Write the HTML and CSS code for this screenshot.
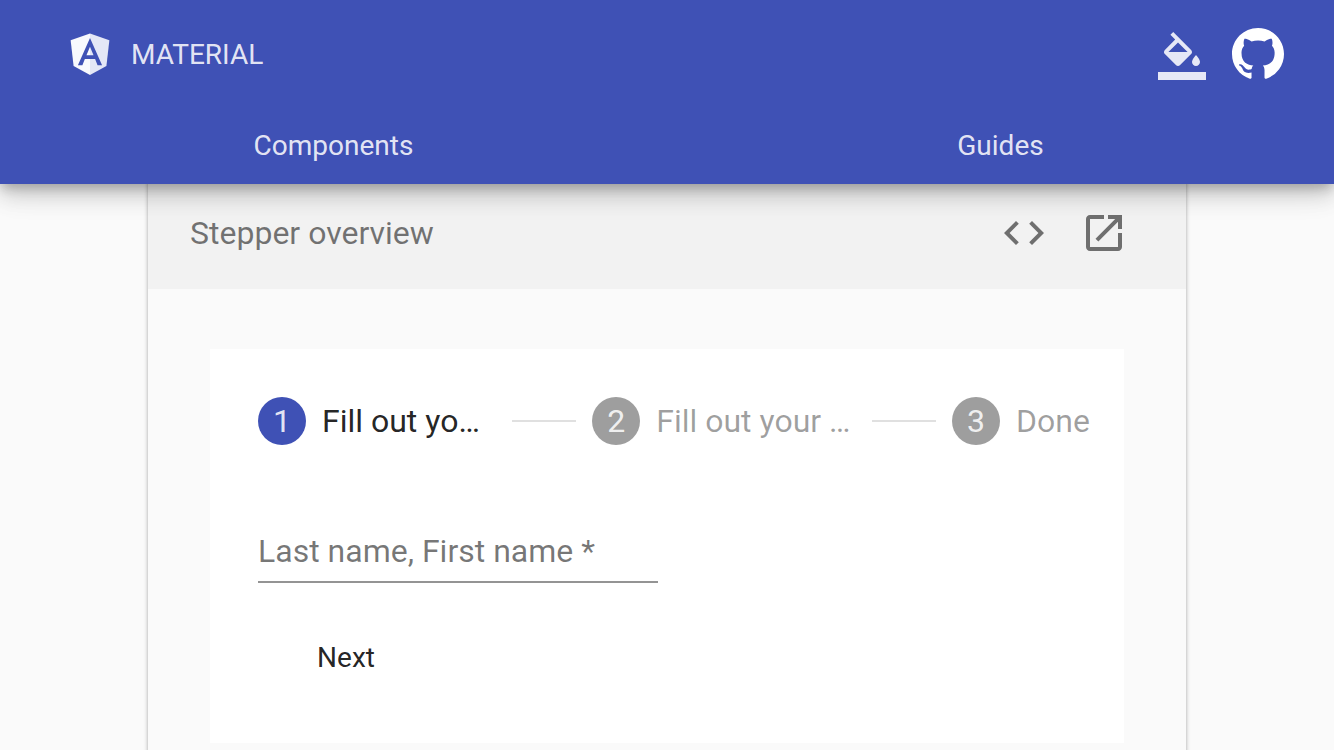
FILE: index.html
```html
<!DOCTYPE html>
<html lang="en">
<head>
  <meta charset="UTF-8">
  <meta name="viewport" content="width=device-width, initial-scale=1.0">
  <title>Angular Material</title>
  <link rel="stylesheet" href="styles.css">
</head>
<body>
  <header class="navbar">
    <div class="navbar-top">
      <a class="brand" href="#">
        <svg class="brand-logo" viewBox="0 0 250 250" aria-hidden="true">
          <path fill="#f8f9fd" d="M125 26L31.9 59.2l14.2 123.1L125 226z"/>
          <path fill="#e4e7f6" d="M125 26l93.1 33.2-14.2 123.1L125 226z"/>
          <path fill="#3f51b5" fill-rule="evenodd" d="M125 48L66.8 178.6h21.7l11.7-29.2h49.4l11.7 29.2H183L125 48zm17 83.4h-34l17-40.9 17 40.9z"/>
        </svg>
        <span>MATERIAL</span>
      </a>
      <div class="navbar-actions">
        <button type="button" class="icon-button" aria-label="Select a theme">
          <svg class="icon" viewBox="0 0 24 24" aria-hidden="true">
            <path d="M16.56 8.94L7.62 0 6.21 1.41l2.38 2.38-5.15 5.15c-.59.59-.59 1.54 0 2.12l5.5 5.5c.29.29.68.44 1.06.44s.77-.15 1.06-.44l5.5-5.5c.59-.58.59-1.53 0-2.12zM5.21 10L10 5.21 14.79 10H5.21zM19 11.5s-2 2.17-2 3.5c0 1.1.9 2 2 2s2-.9 2-2c0-1.33-2-3.5-2-3.5zM0 20h24v4H0z"/>
          </svg>
        </button>
        <a class="github-link" href="#" aria-label="GitHub">
          <svg class="github-logo" viewBox="0 0 16 16" aria-hidden="true">
            <path d="M8 0C3.58 0 0 3.58 0 8c0 3.54 2.29 6.53 5.47 7.59.4.07.55-.17.55-.38 0-.19-.01-.82-.01-1.49-2.01.37-2.53-.49-2.69-.94-.09-.23-.48-.94-.82-1.13-.28-.15-.68-.52-.01-.53.63-.01 1.08.58 1.23.82.72 1.21 1.87.87 2.33.66.07-.52.28-.87.51-1.07-1.78-.2-3.64-.89-3.64-3.95 0-.87.31-1.59.82-2.15-.08-.2-.36-1.02.08-2.12 0 0 .67-.21 2.2.82.64-.18 1.32-.27 2-.27.68 0 1.36.09 2 .27 1.53-1.04 2.2-.82 2.2-.82.44 1.1.16 1.92.08 2.12.51.56.82 1.27.82 2.15 0 3.07-1.87 3.75-3.65 3.95.29.25.54.73.54 1.48 0 1.07-.01 1.93-.01 2.2 0 .21.15.46.55.38A8.01 8.01 0 0 0 16 8c0-4.42-3.58-8-8-8z"/>
          </svg>
        </a>
      </div>
    </div>
    <nav class="navbar-links">
      <a href="#">Components</a>
      <a href="#">Guides</a>
    </nav>
  </header>

  <main class="page">
    <section class="example">
      <div class="example-header">
        <h3>Stepper overview</h3>
        <div class="example-actions">
          <button type="button" class="icon-button" aria-label="View source">
            <svg class="icon" viewBox="0 0 24 24" aria-hidden="true">
              <path d="M9.4 16.6L4.8 12l4.6-4.6L8 6l-6 6 6 6 1.4-1.4zm5.2 0l4.6-4.6-4.6-4.6L16 6l6 6-6 6-1.4-1.4z"/>
            </svg>
          </button>
          <button type="button" class="icon-button" aria-label="Open in new window">
            <svg class="icon" viewBox="0 0 24 24" aria-hidden="true">
              <path d="M19 19H5V5h7V3H5c-1.11 0-2 .9-2 2v14c0 1.1.89 2 2 2h14c1.1 0 2-.9 2-2v-7h-2v7zM14 3v2h3.59l-9.83 9.83 1.41 1.41L19 6.41V10h2V3h-7z"/>
            </svg>
          </button>
        </div>
      </div>

      <div class="example-body">
        <div class="stepper">
          <div class="stepper-header">
            <div class="step active">
              <span class="step-number">1</span>
              <span class="step-label">Fill out your name</span>
            </div>
            <div class="step-line"></div>
            <div class="step">
              <span class="step-number">2</span>
              <span class="step-label">Fill out your address</span>
            </div>
            <div class="step-line"></div>
            <div class="step last">
              <span class="step-number">3</span>
              <span class="step-label">Done</span>
            </div>
          </div>
          <form class="stepper-content">
            <input type="text" class="name-input" placeholder="Last name, First name *" aria-label="Last name, First name" required>
            <button type="submit" class="next-button">Next</button>
          </form>
        </div>
      </div>
    </section>
  </main>
</body>
</html>
```
FILE: styles.css
```css
* {
  box-sizing: border-box;
}

body {
  display: flex;
  flex-direction: column;
  height: 100vh;
  margin: 0;
  font-family: Roboto, "Liberation Sans", sans-serif;
  font-size: 32px;
  background-color: #fafafa;
  color: rgba(0, 0, 0, .87);
}

a {
  color: inherit;
  text-decoration: none;
}

button {
  padding: 0;
  border: none;
  background: none;
  color: inherit;
  font-family: inherit;
  cursor: pointer;
}

.icon-button {
  display: flex;
}

.icon {
  width: 48px;
  height: 48px;
  fill: currentColor;
}

/* Top bar */
.navbar {
  position: relative;
  z-index: 1;
  flex: none;
  background-color: #3f51b5;
  color: rgba(255, 255, 255, .87);
  font-size: 28px;
  box-shadow: 0 6px 10px -2px rgba(0, 0, 0, .2),
              0 12px 20px 0 rgba(0, 0, 0, .14),
              0 2px 36px 0 rgba(0, 0, 0, .12);
}

.navbar-top {
  display: flex;
  align-items: center;
  justify-content: space-between;
  height: 108px;
  padding: 0 50px 0 64px;
}

.brand {
  display: flex;
  align-items: center;
  gap: 15px;
}

.brand-logo {
  width: 52px;
  height: 52px;
}

.navbar-actions {
  display: flex;
  align-items: flex-end;
  gap: 26px;
}

.github-link {
  display: flex;
}

.github-logo {
  width: 52px;
  height: 52px;
  fill: #fff;
}

.navbar-links {
  display: flex;
}

.navbar-links a {
  flex: 1;
  line-height: 76px;
  text-align: center;
}

/* Example card */
.page {
  flex: 1;
  min-height: 0;
  padding: 0 148px;
  overflow: hidden;
}

.example {
  margin-top: -7px;
  padding-bottom: 60px;
  box-shadow: 0 0 4px rgba(0, 0, 0, .35);
}

.example-header {
  display: flex;
  align-items: center;
  justify-content: space-between;
  padding: 32px 58px 32px 42px;
  background-color: #f2f2f2;
  color: rgba(0, 0, 0, .54);
}

.example-header h3 {
  margin: 0;
  font-size: 32px;
  font-weight: 400;
  line-height: 48px;
}

.example-actions {
  display: flex;
  gap: 32px;
}

.example-body {
  padding: 60px 62px;
}

/* Stepper */
.stepper {
  background-color: #fff;
}

.stepper-header {
  display: flex;
  align-items: center;
  gap: 16px;
  height: 144px;
  padding: 0 8px 0 48px;
}

.step {
  display: flex;
  align-items: center;
  gap: 16px;
  min-width: 0;
  color: rgba(0, 0, 0, .38);
}

.step.active {
  color: rgba(0, 0, 0, .87);
}

.step.last {
  flex: none;
}

.step.last .step-label {
  min-width: 100px;
}

.step-number {
  flex: none;
  width: 48px;
  height: 48px;
  border-radius: 50%;
  background-color: #9e9e9e;
  color: rgba(255, 255, 255, .87);
  line-height: 48px;
  text-align: center;
}

.step.active .step-number {
  background-color: #3f51b5;
}

.step-label {
  overflow: hidden;
  line-height: 48px;
  text-overflow: ellipsis;
  white-space: nowrap;
}

.step-line {
  flex: 1 0 64px;
  height: 2px;
  background-color: #e0e0e0;
}

.stepper-content {
  display: flex;
  flex-direction: column;
  align-items: flex-start;
  gap: 38px;
  padding: 28px 48px 50px;
}

.name-input {
  width: 400px;
  max-width: 100%;
  height: 62px;
  padding: 0;
  border: none;
  border-bottom: 2px solid #949494;
  border-radius: 0;
  outline: none;
  background: none;
  color: inherit;
  font-family: inherit;
  font-size: 32px;
}

.name-input::placeholder {
  color: rgba(0, 0, 0, .54);
}

.next-button {
  min-width: 176px;
  height: 72px;
  font-size: 28px;
}
```
